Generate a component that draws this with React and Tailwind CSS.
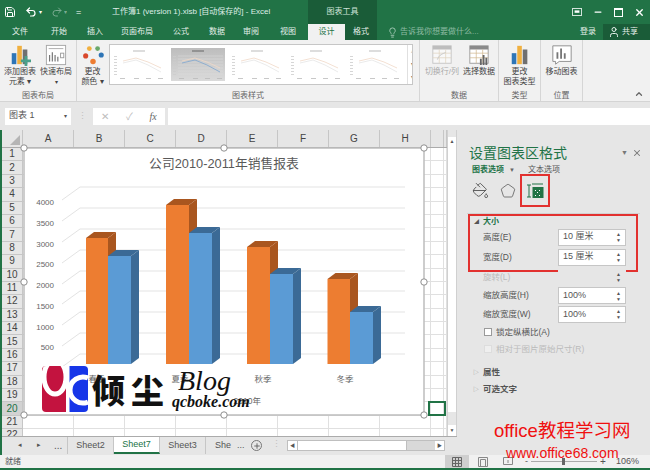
import React from 'react';
import { ChevronUp, Lightbulb, Minus, PaintBucket, Pentagon, Plus, Redo2, Save, Undo2, User, X } from 'lucide-react';

const font = '[font-family:"Liberation_Sans","Noto_Sans_CJK_SC",sans-serif]';

const TABS = [
  ['文件', 'w-[40px]'], ['开始', 'w-[38px]'], ['插入', 'w-[34px]'], ['页面布局', 'w-[50px]'],
  ['公式', 'w-[38px]'], ['数据', 'w-[34px]'], ['审阅', 'w-[34px]'], ['视图', 'w-[40px]'],
];

const COLUMNS = [['A', 'w-[51px]'], ['B', 'w-[51px]'], ['C', 'w-[51px]'], ['D', 'w-[51px]'], ['E', 'w-[51px]'], ['F', 'w-[51px]'], ['G', 'w-[51px]'], ['H', 'w-[51px]'], ['', 'w-[13px]'], ['', 'w-[3px]']];
const ROWS = Array.from({ length: 22 }, (_, i) => i + 1);

// orange x, orange top, blue x, blue top for each group of bars
const BARS = [
  [86, 238, 108, 256], [166, 205, 189, 233], [247, 247, 270, 274], [327.5, 279, 350, 312],
];
const GRID_Y = [187, 208, 229, 250, 271, 291, 312, 333, 354];
const AXIS = [[4000, 202], [3500, 223], [3000, 244], [2500, 264], [2000, 285], [1500, 306], [1000, 327], [500, 347], [0, 368]];

const Bar = ({ x, top, w, front, side, cap }) => (
  <g>
    <polygon points={`${x},${top} ${x + 8},${top - 6} ${x + w + 8},${top - 6} ${x + w},${top}`} fill={cap} />
    <polygon points={`${x + w},${top} ${x + w + 8},${top - 6} ${x + w + 8},${358} ${x + w},364`} fill={side} />
    <rect x={x} y={top} width={w} height={364 - top} fill={front} />
  </g>
);

const Chart = () => (
  <svg viewBox="24 148 400 267" className="absolute left-[24px] top-[18px] w-[400px] h-[267px] overflow-visible">
    <rect x="24" y="148" width="400" height="267" fill="#fff" stroke="#bdbdbd" strokeWidth="1.5" />
    <text x="224" y="168" textAnchor="middle" fontSize="12.8" fill="#595959">公司2010-2011年销售报表</text>
    {GRID_Y.map(y => (
      <polyline key={y} points={`62,${y + 13} 80,${y} 405,${y}`} stroke="#e3e3e3" strokeWidth="1" fill="none" />
    ))}
    {AXIS.map(([v, y]) => (
      <text key={v} x="54" y={y + 3} textAnchor="end" fontSize="8" fill="#666">{v}</text>
    ))}
    {BARS.map(([ox, oTop, bx, bTop]) => (
      <g key={ox}>
        <Bar x={ox} top={oTop} w={bx - ox} front="#ed7d31" side="#a9561f" cap="#a9561f" />
        <Bar x={bx} top={bTop} w={23} front="#5b9bd5" side="#3b6a96" cap="#3b6a96" />
      </g>
    ))}
    <text x="97" y="382" textAnchor="middle" fontSize="8.5" fill="#666">春季</text>
    <text x="180" y="382" textAnchor="middle" fontSize="8.5" fill="#666">夏季</text>
    <text x="263" y="382" textAnchor="middle" fontSize="8.5" fill="#666">秋季</text>
    <text x="345" y="382" textAnchor="middle" fontSize="8.5" fill="#666">冬季</text>
    <text x="261" y="404" textAnchor="end" fontSize="8.5" fill="#666">2010年</text>
    {[[24, 148], [224, 148], [424, 148], [24, 282], [424, 282], [24, 415], [224, 415], [424, 415]].map(([x, y]) => (
      <circle key={`${x}-${y}`} cx={x} cy={y} r="3.2" fill="#fff" stroke="#8f8f8f" strokeWidth="1" />
    ))}
  </svg>
);

// small line chart previews of the style gallery
const StyleThumb = ({ selected }) => (
  <svg viewBox="0 0 54 33" className={`w-[54px] h-[33px] shrink-0 ${selected ? 'bg-gradient-to-b from-[#bdbdbd] to-[#dadada]' : 'bg-white'}`}>
    <rect x="21" y="2.5" width="12" height="1" fill={selected ? '#666' : '#bbb'} />
    {[8, 11, 14, 17, 20, 23, 26].map(y => (
      <g key={y}>
        <rect x="2" y={y} width="3" height="0.8" fill="#ccc" />
        {selected && <line x1="7" y1={y} x2="52" y2={y} stroke="#dcdcdc" strokeWidth="0.5" />}
      </g>
    ))}
    <polyline points="11,13 24,10 36,14 49,20" fill="none" stroke="#f0d8c6" strokeWidth="0.8" />
    <polyline points="11,15 24,12 36,17 49,24" fill="none" stroke={selected ? '#7fa6cf' : '#e4e4e4'} strokeWidth="0.8" />
    <rect x="8" y="30" width="5" height="0.8" fill="#bbb" /><rect x="22" y="30" width="5" height="0.8" fill="#bbb" />
    <rect x="34" y="30" width="5" height="0.8" fill="#bbb" /><rect x="46" y="30" width="5" height="0.8" fill="#bbb" />
  </svg>
);

const BarsIcon = ({ plus }) => (
  <svg viewBox="0 0 24 24" className="w-[22px] h-[22px]">
    <rect x="3" y="10" width="5" height="12" fill="#2e75b6" />
    <rect x="9" y="2" width="5" height="20" fill="#f0b040" />
    <rect x="15" y="6" width="5" height="16" fill="#707070" />
    {plus && <path d="M17 13h3v4h4v3h-4v4h-3v-4h-4v-3h4z" fill="#4aa08a" />}
  </svg>
);

const LayoutIcon = () => (
  <svg viewBox="0 0 24 24" className="w-[22px] h-[22px]">
    <rect x="1.5" y="1.5" width="21" height="21" fill="#fff" stroke="#a5a5a5" />
    <line x1="4" y1="5" x2="20" y2="5" stroke="#aaa" />
    <path d="M5 19V12M8 19V9M11 19V12M14 19V14" stroke="#777" strokeWidth="1.3" />
    <rect x="17" y="10" width="3.5" height="5" fill="none" stroke="#999" />
  </svg>
);

const PaletteIcon = () => (
  <svg viewBox="0 0 24 24" className="w-[22px] h-[22px]">
    <circle cx="8" cy="5" r="2.6" fill="#f0b040" /><circle cx="17" cy="5" r="2.6" fill="#6aa86a" />
    <circle cx="4" cy="13" r="2.8" fill="#d9482b" /><circle cx="21" cy="12" r="2.8" fill="#2e75b6" />
    <circle cx="12" cy="19" r="3" fill="#ed7d31" />
  </svg>
);

const TableIcon = ({ chart, dim }) => (
  <svg viewBox="0 0 24 24" className={`w-[22px] h-[22px] ${dim ? 'opacity-50' : ''}`}>
    <rect x="2" y="2" width="20" height="19" fill="#fff" stroke="#9a9a9a" />
    <rect x="2" y="2" width="20" height="4" fill="#8a8a8a" />
    <path d="M2 10h20M2 15h20M9 6v15M16 6v15" stroke="#d0b890" strokeWidth="0.8" />
    {chart && <path d="M14 23v-7M17 23v-11M20 23v-8" stroke="#666" strokeWidth="2" />}
    {!chart && <path d="M7 17c2-6 6-6 9-8" stroke="#999" fill="none" />}
  </svg>
);

const MoveIcon = () => (
  <svg viewBox="0 0 24 24" className="w-[22px] h-[22px]">
    <path d="M2 2h20v17H9l-4 3v-3H2z" fill="#fff" stroke="#8a8a8a" />
    <path d="M7 16V9M11 16V5M15 16v-6" stroke="#777" strokeWidth="2" fill="none" />
  </svg>
);

const RibbonButton = ({ icon, lines, caret, width, dim }) => (
  <div className={`flex flex-col items-center shrink-0 ${width}`}>
    <div className="h-[23px] flex items-center justify-center">{icon}</div>
    <div className={`text-[8px] leading-[10px] mt-[1px] text-center whitespace-nowrap ${dim ? 'text-[#aaaaaa]' : 'text-[#444444]'}`}>
      {lines.map((l, i) => <div key={i}>{l}</div>)}
      {caret && <div className="text-[6px]">▾</div>}
    </div>
  </div>
);

const RibbonGroup = ({ label, width, className = 'justify-center', children }) => (
  <div className={`flex flex-col h-full shrink-0 border-r border-[#d6d6d6] ${width}`}>
    <div className={`flex-1 flex pt-[3px] ${className}`}>{children}</div>
    <div className="h-[10px] text-center text-[8px] leading-[10px] text-[#666666]">{label}</div>
  </div>
);

const Spinner = () => (
  <div className="flex flex-col text-[5px] leading-[6px] text-[#555555]"><span>▲</span><span>▼</span></div>
);

const SizeField = ({ label, value, dim, height = 'h-[18.5px]', pad = 'pl-[26px]' }) => (
  <div className={`flex items-center pr-[24px] ${height} ${pad}`}>
    <span className={`text-[8.5px] flex-1 whitespace-nowrap ${dim ? 'text-[#bbbbbb]' : 'text-[#555555]'}`}>{label}</span>
    <div className={`w-[68px] h-[17px] flex items-center justify-between pl-[4px] pr-[4px] border text-[9px] ${dim ? 'bg-[#e6e6e6] border-[#e6e6e6]' : 'bg-white border-[#c6c6c6] text-[#555555]'}`}>
      <span>{value}</span><Spinner />
    </div>
  </div>
);

const SheetTab = ({ name, active, width }) => (
  <div className={`h-[17px] flex items-center justify-center text-[9px] shrink-0 border-r border-[#c6c6c6] ${width} ${active ? 'bg-white text-[#217346] border-b-2 border-b-[#217346]' : 'text-[#555555]'}`}>
    {name}
  </div>
);

const Logo = () => (
  <svg viewBox="0 0 46 46" className="w-[46px] h-[46px] shrink-0 rounded-[4px]">
    <rect x="0" y="0" width="30" height="46" fill="#c3133f" />
    <rect x="26" y="0" width="20" height="46" fill="#1736e8" />
    <ellipse cx="13" cy="11" rx="11" ry="17" fill="#c3133f" stroke="#fff" strokeWidth="5" />
    <rect x="24" y="0" width="3.5" height="46" fill="#fff" />
    <path d="M46 36a13 13 0 1 1 0-24" fill="none" stroke="#fff" strokeWidth="5" />
  </svg>
);

export default function App() {
  return (
    <div className={`relative w-[650px] h-[470px] overflow-hidden flex flex-col bg-[#e6e6e6] ${font}`}>
      {/* title bar */}
      <div className="h-[24px] shrink-0 flex items-center bg-[#217346] text-white">
        <div className="w-[112px] shrink-0 flex items-center">
          <Save size={12} className="ml-[4px]" strokeWidth={2} />
          <Undo2 size={12} className="ml-[9px]" strokeWidth={2.4} />
          <span className="text-[6px] ml-[2px]">▾</span>
          <Redo2 size={12} className="ml-[9px] opacity-40" />
          <span className="text-[6px] ml-[1px] opacity-40">▾</span>
          <span className="text-[9px] ml-[9px] leading-none">=</span>
        </div>
        <span className="text-[8px] text-[#dfeee6] w-[196px] shrink-0 whitespace-nowrap">工作簿1 (version 1).xlsb [自动保存的] - Excel</span>
        <div className="h-full w-[69px] shrink-0 bg-[#1a5c38] flex items-center justify-center text-[8px] text-[#cfe3d8]">图表工具</div>
        <div className="flex-1" />
        <svg viewBox="0 0 12 10" className="w-[10px] h-[8px] mr-[11px]"><rect x="0.5" y="0.5" width="11" height="9" fill="none" stroke="#fff" /><rect x="3" y="3" width="6" height="3" fill="#fff" /></svg>
        <Minus size={10} className="mr-[11px]" strokeWidth={3} />
        <div className="w-[9px] h-[9px] border border-white border-t-2 mr-[11px]" />
        <X size={11} className="mr-[5px]" strokeWidth={3} />
      </div>

      {/* ribbon tabs */}
      <div className="h-[16px] shrink-0 flex items-center bg-[#217346] text-[8px] text-[#e4efe9]">
        {TABS.map(([t, w]) => <span key={t} className={`${w} text-center shrink-0`}>{t}</span>)}
        <span className="w-[37px] h-full bg-[#f1f1f1] text-[#217346] text-center leading-[16px] shrink-0">设计</span>
        <span className="w-[32px] h-full bg-[#1a5c38] text-center leading-[16px] shrink-0">格式</span>
        <Lightbulb size={11} className="ml-[10px] text-[#a9cdb9] shrink-0" />
        <span className="ml-[2px] text-[#8fbba3] w-[80px] shrink-0 whitespace-nowrap">告诉我你想要做什么...</span>
        <span className="ml-[100px] w-[23px] shrink-0">登录</span>
        <div className="h-full flex-1 bg-[#1a5c38] flex items-center pl-[5px] gap-[2px]"><User size={12} /><span>共享</span></div>
      </div>

      {/* ribbon */}
      <div className="h-[62px] shrink-0 flex bg-[#f1f1f1] border-b border-[#d4d4d4]">
        <RibbonGroup label="图表布局" width="w-[77px]" className="justify-start">
          <RibbonButton width="w-[40px]" icon={<BarsIcon plus />} lines={['添加图表', '元素 ▾']} />
          <RibbonButton width="w-[32px]" icon={<LayoutIcon />} lines={['快速布局']} caret />
        </RibbonGroup>
        <RibbonGroup label="图表样式" width="w-[343px]">
          <div className="w-full flex items-start pl-[3px] pr-[6px]">
            <RibbonButton width="w-[25px]" icon={<PaletteIcon />} lines={['更改', '颜色 ▾']} />
            <div className="ml-[4px] mt-[1px] flex-1 h-[41px] flex items-center gap-[5px] pl-[2px] bg-white border border-[#c6c6c6] overflow-hidden">
              <StyleThumb /><StyleThumb selected /><StyleThumb /><StyleThumb /><StyleThumb />
              <div className="ml-auto w-[9px] h-full shrink-0 flex flex-col items-center justify-between text-[6px] leading-[13px] text-[#777777] border-l border-[#e0e0e0]">
                <span className="text-[#cccccc]">▴</span><span>▾</span><span>▾</span>
              </div>
            </div>
          </div>
        </RibbonGroup>
        <RibbonGroup label="数据" width="w-[79px]" className="justify-start pl-[2px]">
          <RibbonButton dim width="w-[40px]" icon={<TableIcon dim />} lines={['切换行/列']} />
          <RibbonButton width="w-[34px]" icon={<TableIcon chart />} lines={['选择数据']} />
        </RibbonGroup>
        <RibbonGroup label="类型" width="w-[42px]">
          <RibbonButton width="w-[41px]" icon={<BarsIcon />} lines={['更改', '图表类型']} />
        </RibbonGroup>
        <RibbonGroup label="位置" width="w-[42px]">
          <RibbonButton width="w-[41px]" icon={<MoveIcon />} lines={['移动图表']} />
        </RibbonGroup>
        <div className="flex-1 flex items-end justify-end pb-[2px] pr-[6px]">
          <ChevronUp size={10} className="text-[#666666]" strokeWidth={3} />
        </div>
      </div>

      {/* formula bar */}
      <div className="h-[28px] shrink-0 flex items-center pl-[5px] bg-[#e6e6e6]">
        <div className="w-[66px] h-[17px] bg-white flex items-center justify-between px-[4px] text-[9px] text-[#555555]">
          <span>图表 1</span><span className="text-[6px]">▾</span>
        </div>
        <span className="w-[22px] text-center text-[9px] leading-none text-[#c0c0c0]">⋮</span>
        <div className="w-[72px] h-[17px] bg-white flex items-center justify-around text-[10px] text-[#bdbdbd]">
          <span>✕</span><span>✓</span><span className="text-[#666666] italic [font-family:'Liberation_Serif',serif]">fx</span>
        </div>
        <div className="ml-[3px] flex-1 h-[17px] bg-white" />
      </div>

      {/* sheet + pane */}
      <div className="h-[325px] shrink-0 flex">
        <div className="w-[457px] shrink-0 flex flex-col border-l-2 border-[#217346]">
          <div className="flex h-[306px]">
            <div className="relative w-[445px] h-full overflow-hidden bg-white">
              <div className="flex h-[18px] bg-[#e6e6e6] border-b border-[#ababab]">
                <div className="w-[21px] shrink-0 border-r border-[#c6c6c6] flex items-end justify-end p-[2px]">
                  <div className="w-0 h-0 border-l-[10px] border-l-transparent border-b-[10px] border-b-[#b5b5b5]" />
                </div>
                {COLUMNS.map(([c, w], i) => (
                  <div key={i} className={`${w} shrink-0 flex items-center justify-center border-r border-[#c6c6c6] text-[10px] text-[#444444]`}>{c}</div>
                ))}
              </div>
              {ROWS.map(r => (
                <div key={r} className="flex h-[13.4px]">
                  <div className={`w-[21px] shrink-0 flex items-center justify-center border-r border-b border-[#c6c6c6] text-[10px] leading-none ${r === 20 ? 'bg-[#d2d2d2] text-[#217346]' : 'bg-[#e6e6e6] text-[#444444]'}`}>{r}</div>
                  {COLUMNS.map(([c, w], i) => (
                    <div key={i} className={`${w} shrink-0 border-r border-b border-[#e0e0e0]`} />
                  ))}
                </div>
              ))}
              <div className="absolute left-[426px] top-[271px] w-[18px] h-[15px] border-2 border-[#217346]" />
              <div className="absolute left-[-2px] top-0 w-0 h-0"><Chart /></div>
            </div>
            <div className="w-[10px] shrink-0 flex flex-col pt-[7px] bg-[#e6e6e6] border-x border-[#d0d0d0]">
              <div className="h-[9px] bg-white text-[5px] leading-[9px] text-center text-[#555555]">▲</div>
              <div className="h-[266px] bg-white" />
              <div className="h-[13px]" />
              <div className="h-[11px] bg-white text-[5px] leading-[11px] text-center text-[#555555]">▼</div>
            </div>
          </div>
          <div className="h-[19px] flex items-start border-t border-[#ababab] bg-[#e6e6e6]">
            <div className="w-[65px] h-[17px] flex items-center text-[#555555] text-[7px] shrink-0">
              <span className="ml-[16px]">◂</span><span className="ml-[15px]">▸</span><span className="ml-[13px] text-[10px]">...</span>
            </div>
            <SheetTab name="Sheet2" width="w-[47px] border-l" />
            <SheetTab name="Sheet7" width="w-[46px]" active />
            <SheetTab name="Sheet3" width="w-[46px]" />
            <div className="w-[43px] h-[17px] flex items-center pl-[9px] gap-[6px] text-[9px] text-[#555555] shrink-0">She <span>...</span></div>
            <div className="ml-[2px] mt-[3px] w-[11px] h-[11px] rounded-full border border-[#777777] flex items-center justify-center shrink-0">
              <Plus size={8} className="text-[#555555]" strokeWidth={2.5} />
            </div>
            <span className="w-[25px] pl-[10px] mt-[1px] text-[9px] text-[#c0c0c0] shrink-0">⋮</span>
            <div className="mt-[3px] w-[158px] h-[11px] flex items-center bg-[#d9d9d9] border border-[#bfbfbf] shrink-0">
              <div className="w-[9px] h-full bg-white text-[5px] leading-[9px] text-center text-[#555555]">◀</div>
              <div className="w-[110px] h-full bg-white border-l border-r border-[#bfbfbf]" />
              <div className="ml-auto w-[9px] h-full bg-white text-[5px] leading-[9px] text-center text-[#555555]">▶</div>
            </div>
          </div>
        </div>

        {/* format pane */}
        <div className="flex-1 flex flex-col bg-[#e6e6e6] pt-[13px]">
          <div className="flex items-center h-[20px] pl-[12px] pr-[8px]">
            <span className="flex-1 text-[14px] text-[#217346] whitespace-nowrap">设置图表区格式</span>
            <span className="text-[7px] text-[#777777]">▼</span>
            <X size={10} className="ml-[4px] text-[#777777]" strokeWidth={2.5} />
          </div>
          <div className="flex items-center h-[14px] pl-[15px] text-[8px]">
            <span className="font-bold text-[#217346]">图表选项</span>
            <span className="ml-[5px] text-[6px] text-[#666666]">▼</span>
            <span className="ml-[13px] text-[#555555]">文本选项</span>
          </div>
          <div className="flex items-center h-[33px] -mt-[3px] pl-[15px]">
            <PaintBucket size={17} className="text-[#555555]" strokeWidth={1.3} />
            <Pentagon size={16} className="ml-[11px] text-[#666666]" strokeWidth={1.3} />
            <div className="ml-[4px] w-[30px] h-[33px] border-2 border-[#e2312f] flex items-center justify-center">
              <svg viewBox="0 0 18 16" className="w-[18px] h-[16px]">
                <path d="M1 2h4M3 2v12M1 14h4M6 1h11" stroke="#217346" strokeWidth="1" fill="none" />
                <rect x="6.5" y="4" width="11" height="11" fill="#217346" />
                <path d="M9 7h1v1H9zM13 7h1v1h-1zM11 9h1v1h-1zM9 12h1v1H9zM13 12h1v1h-1z" fill="#fff" />
              </svg>
            </div>
          </div>
          <div className="h-[1px] mt-[6px] mx-[10px] bg-[#d2d2d2]" />
          <div className="ml-[11px] h-[58px] w-[170px] border-2 border-[#e2312f] flex flex-col">
            <div className="flex items-center h-[11px] pl-[4px] text-[8px] font-bold text-[#217346]">
              <span className="text-[5px] w-[9px] text-[#555555]">◢</span>大小
            </div>
            <div className="-ml-[13px] w-[193px] flex flex-col">
              <SizeField height="h-[20px]" label="高度(E)" value="10 厘米" />
              <SizeField height="h-[20px]" label="宽度(D)" value="15 厘米" />
            </div>
          </div>
          <div className="-mt-[4px]">
            <SizeField dim label="旋转(L)" value="" />
          </div>
          <SizeField label="缩放高度(H)" value="100%" />
          <SizeField label="缩放宽度(W)" value="100%" />
          <div className="flex items-center h-[17px] pl-[27px] text-[8.5px] text-[#555555]">
            <div className="w-[8px] h-[8px] bg-white border border-[#9a9a9a] mr-[4px]" />锁定纵横比(A)
          </div>
          <div className="flex items-center h-[17px] pl-[27px] text-[8.5px] text-[#bbbbbb]">
            <div className="w-[8px] h-[8px] bg-[#efefef] border border-[#dddddd] mr-[4px]" />相对于图片原始尺寸(R)
          </div>
          <div className="flex items-center h-[17px] mt-[6px] pl-[16px] text-[8.5px] font-bold text-[#555555]">
            <span className="text-[6px] w-[10px] text-[#999999] font-normal">▷</span>属性
          </div>
          <div className="flex items-center h-[17px] pl-[16px] text-[8.5px] font-bold text-[#555555]">
            <span className="text-[6px] w-[10px] text-[#999999] font-normal">▷</span>可选文字
          </div>
        </div>
      </div>

      {/* status bar */}
      <div className="h-[15px] shrink-0 flex items-center border-b-2 border-[#217346] bg-[#f1f1f1] text-[#555555]">
        <span className="ml-[5px] text-[8px] w-[440px] shrink-0">就绪</span>
        <div className="w-[24px] h-full shrink-0 bg-[#cfcfcf] flex items-center justify-center">
          <svg viewBox="0 0 10 10" className="w-[10px] h-[10px]"><path d="M.5.5h9v9h-9zM3.5.5v9M6.5.5v9M.5 3.5h9M.5 6.5h9" fill="none" stroke="#666" /></svg>
        </div>
        <svg viewBox="0 0 10 10" className="ml-[9px] w-[10px] h-[10px] shrink-0"><path d="M.5.5h9v9h-9zM2.5 2.5h5v7h-5z" fill="none" stroke="#888" /></svg>
        <svg viewBox="0 0 10 10" className="ml-[15px] w-[10px] h-[10px] shrink-0"><path d="M.5.5h9v7h-9zM5 3v3" fill="none" stroke="#888" /></svg>
        <span className="ml-[12px] w-[4px] text-[9px] shrink-0">-</span>
        <div className="relative w-[66px] h-[1px] ml-[2px] bg-[#aaaaaa] shrink-0">
          <div className="absolute left-[31px] -top-[3px] w-[3px] h-[7px] bg-[#666666]" />
        </div>
        <span className="ml-[3px] w-[10px] text-[10px] shrink-0">+</span>
        <span className="ml-[6px] text-[9px]">106%</span>
      </div>

      {/* pasted watermarks */}
      <div className="absolute left-[42px] top-[366px] flex items-center">
        <Logo />
        <span className="ml-[4px] w-[80px] text-[33px] leading-[40px] tracking-[6px] font-black text-[#111111] whitespace-nowrap [font-family:'Noto_Sans_CJK_SC',serif]">倾尘</span>
        <div className="flex flex-col items-start [font-family:'Liberation_Serif',serif] italic text-[#111111]">
          <span className="text-[28px] leading-[26px] pl-[6px]">Blog</span>
          <span className="text-[16px] leading-[16px] font-bold whitespace-nowrap">qcboke.com</span>
        </div>
      </div>
      <div className="absolute left-[494px] top-[417px] text-[18.5px] leading-[28px] text-[#f01010] whitespace-nowrap">office教程学习网</div>
      <div className="absolute left-[506px] top-[444px] text-[14px] leading-[18px] text-[#f01010] whitespace-nowrap">www.office68.com</div>
    </div>
  );
}
